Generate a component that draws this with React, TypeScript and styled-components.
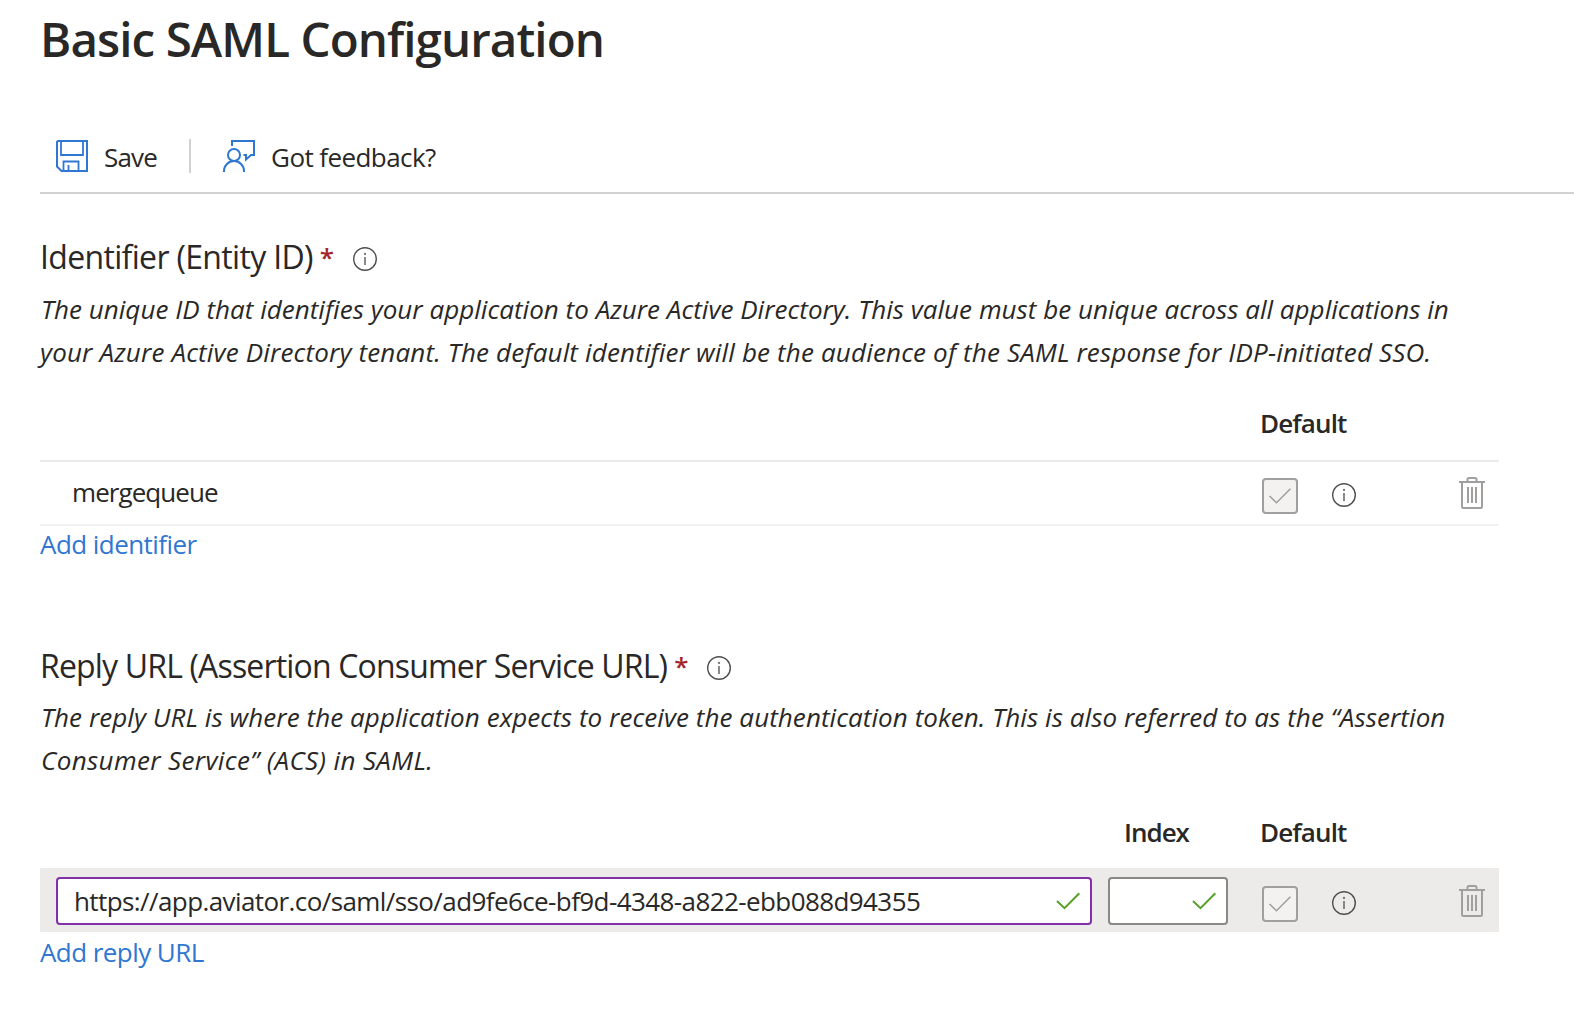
import React from 'react';
import styled, { createGlobalStyle } from 'styled-components';

const GlobalStyle = createGlobalStyle`
  * { box-sizing: border-box; }
  body {
    margin: 0;
    background: #ffffff;
    color: #292827;
    font-family: 'Segoe UI', 'Open Sans', 'Noto Sans', sans-serif;
    font-size: 26px;
    overflow: hidden;
  }
`;

const Page = styled.main`
  width: 1574px;
  height: 1032px;
  padding: 7px 0 0 40px;
  overflow: hidden;
`;

const Text = styled.span<{ $track?: number; $indent?: number }>`
  margin-left: ${(p) => p.$indent ?? 0}px;
  letter-spacing: ${(p) => p.$track ?? 0}px;
  white-space: pre;
`;

const Title = styled.h1`
  margin: 0;
  font-size: 47.5px;
  line-height: 64px;
  font-weight: 600;
`;

const Toolbar = styled.div`
  display: flex;
  align-items: center;
  height: 74px;
  margin-top: 49px;
  padding-left: 16px;
  border-bottom: 2px solid #d2d2d2;
`;

const ToolButton = styled.button`
  display: flex;
  align-items: center;
  gap: 16px;
  padding: 0;
  border: 0;
  background: none;
  color: inherit;
  font: inherit;
  line-height: 36px;
`;

const ToolLabel = styled(Text)`
  padding-top: 2px;
`;

const ToolDivider = styled.span`
  width: 2px;
  height: 34px;
  margin: 0 32px;
  background: #d0d0d0;
`;

const Section = styled.section<{ $top: number }>`
  width: 1459px;
  margin-top: ${(p) => p.$top}px;
`;

const LabelRow = styled.h2`
  display: flex;
  align-items: center;
  height: 44px;
  margin: 0;
  padding-top: 2px;
  font-size: 32px;
  font-weight: 400;
  line-height: 42px;
`;

const Required = styled.span`
  width: 14px;
  margin-left: 7px;
  color: #a4262c;
  font-size: 26px;
  font-weight: 600;
`;

const LabelInfo = styled.span`
  display: flex;
  margin: 4px 0 0 19px;
`;

const Description = styled.p<{ $top: number }>`
  height: 86px;
  margin: ${(p) => p.$top}px 0 0;
  font-style: italic;
  line-height: 43px;
`;

const Grid = styled.div`
  display: grid;
  grid-template-columns: 1068px 154px 64px 114px 59px;
  align-items: center;
`;

const HeaderRow = styled(Grid)<{ $top: number; $height: number }>`
  height: ${(p) => p.$height}px;
  margin-top: ${(p) => p.$top}px;
  font-weight: 600;
  line-height: 36px;
`;

const IndexHead = styled.span`
  padding-left: 16px;
`;

const ValueRow = styled(Grid)`
  height: 66px;
  border-top: 2px solid #eaeaea;
  border-bottom: 2px solid #f1f1f1;
`;

const EditRow = styled(Grid)`
  height: 64px;
  background: #edebe9;
`;

const Value = styled.span`
  padding: 0 0 2px 32px;
  line-height: 36px;
`;

const Field = styled.div<{ $active?: boolean }>`
  display: flex;
  align-items: center;
  justify-content: space-between;
  height: 48px;
  margin-top: 2px;
  padding: 0 10px 0 16px;
  border: 2px solid ${(p) => (p.$active ? '#8031a7' : '#8a8886')};
  border-radius: 4px;
  background: #ffffff;
  line-height: 36px;
`;

const UrlField = styled(Field)`
  margin-left: 16px;
  margin-right: 16px;
`;

const IndexField = styled(Field)`
  width: 120px;
  justify-content: flex-end;
`;

const CheckBox = styled.span<{ $push: number }>`
  display: flex;
  align-items: center;
  justify-content: center;
  width: 36px;
  height: 36px;
  margin-top: ${(p) => p.$push}px;
  border: 2px solid #a19f9d;
  border-radius: 4px;
  background: #f3f2f1;
`;

const IconCell = styled.span<{ $push?: number; $left?: number }>`
  display: flex;
  padding-top: ${(p) => p.$push ?? 0}px;
  padding-left: ${(p) => p.$left ?? 0}px;
`;

const AddLink = styled.a<{ $top?: number }>`
  display: block;
  height: 36px;
  margin-top: ${(p) => p.$top ?? 0}px;
  color: #3077d2;
  line-height: 36px;
`;

const SaveIcon = () => (
  <svg width="32" height="32" viewBox="0 0 32 32" fill="none" stroke="#3077d2" strokeWidth="2">
    <path d="M2 1H31V31H5.500L1 26.500V2Z" />
    <path d="M5 1V15H27V1" strokeWidth="1.800" />
    <path d="M7.500 31V21.500H22.500V31M12.500 25V30" strokeWidth="1.800" />
  </svg>
);

const FeedbackIcon = () => (
  <svg width="32" height="32" viewBox="0 0 32 32" fill="none" stroke="#3077d2" strokeWidth="2">
    <path d="M9 6V1H31V15H28L23 19.500V15H20.500" />
    <circle cx="11" cy="15" r="6" />
    <path d="M1 32V31A10 10 0 0 1 21 31V32" />
  </svg>
);

const InfoIcon = () => (
  <svg width="24" height="24" viewBox="0 0 24 24" fill="none">
    <circle cx="12" cy="12" r="11.300" stroke="#4f4e4d" strokeWidth="1.400" />
    <path d="M12 10V18" stroke="#767574" strokeWidth="1.700" />
    <circle cx="12" cy="7" r="1.150" fill="#767574" />
  </svg>
);

const TickIcon = ({ color }: { color: string }) => (
  <svg width="24" height="18" viewBox="0 0 24 18" fill="none" stroke={color} strokeWidth="2">
    <path d="M1 9L8.500 16.200L23.300 1.200" />
  </svg>
);

const BoxTickIcon = () => (
  <svg width="22" height="16" viewBox="0 0 22 16" fill="none" stroke="#a19f9d" strokeWidth="1.600">
    <path d="M.6 8L7.500 14.700L21.400 .8" />
  </svg>
);

const TrashIcon = () => (
  <svg width="26" height="32" viewBox="0 0 26 32" fill="none" stroke="#a19f9d" strokeWidth="2">
    <path d="M0 5H26M8.500 5V2.500Q8.500 1 10 1H16Q17.500 1 17.500 2.500V5" />
    <path d="M3 5V29.500Q3 31 4.500 31H21.500Q23 31 23 29.500V5" />
    <path d="M9 10V26M13 10V26M17 10V26" />
  </svg>
);

const RowActions = ({ shift = 0 }: { shift?: number }) => (
  <>
    <CheckBox $push={6 + shift}><BoxTickIcon /></CheckBox>
    <IconCell $push={4 + shift} $left={6}><InfoIcon /></IconCell>
    <IconCell $push={shift} $left={19}><TrashIcon /></IconCell>
  </>
);

export default function App() {
  return (
    <>
      <GlobalStyle />
      <Page>
        <Title><Text $track={-0.92}>Basic SAML Configuration</Text></Title>
        <Toolbar>
          <ToolButton><SaveIcon /><ToolLabel $track={-0.8}>Save</ToolLabel></ToolButton>
          <ToolDivider />
          <ToolButton><FeedbackIcon /><ToolLabel $track={-0.58}>Got feedback?</ToolLabel></ToolButton>
        </Toolbar>

        <Section $top={40}>
          <LabelRow>
            <Text $track={-0.67}>Identifier (Entity ID)</Text>
            <Required>*</Required>
            <LabelInfo><InfoIcon /></LabelInfo>
          </LabelRow>
          <Description $top={10}>
            <Text $track={0.027} $indent={1}>The unique ID that identifies your application to Azure Active Directory. This value must be unique across all applications in</Text>
            <br />
            <Text $track={0.16}>your Azure Active Directory tenant. The default identifier will be the audience of the SAML response for IDP-initiated SSO.</Text>
          </Description>
          <HeaderRow $top={12} $height={74}>
            <span />
            <span />
            <Text $track={-0.87} $indent={-2}>Default</Text>
          </HeaderRow>
          <ValueRow>
            <Value><Text $track={-0.93}>mergequeue</Text></Value>
            <span />
            <RowActions />
          </ValueRow>
          <AddLink><Text $track={-0.55}>Add identifier</Text></AddLink>
        </Section>

        <Section $top={81}>
          <LabelRow>
            <Text $track={-0.83}>Reply URL (Assertion Consumer Service URL)</Text>
            <Required>*</Required>
            <LabelInfo><InfoIcon /></LabelInfo>
          </LabelRow>
          <Description $top={9}>
            <Text $track={0.068} $indent={1}>The reply URL is where the application expects to receive the authentication token. This is also referred to as the “Assertion</Text>
            <br />
            <Text $track={0.37} $indent={1}>Consumer Service” (ACS) in SAML.</Text>
          </Description>
          <HeaderRow $top={13} $height={73}>
            <span />
            <IndexHead><Text $track={-1}>Index</Text></IndexHead>
            <Text $track={-0.87} $indent={-2}>Default</Text>
          </HeaderRow>
          <EditRow>
            <UrlField $active>
              <Text $track={-0.59}>https://app.aviator.co/saml/sso/ad9fe6ce-bf9d-4348-a822-ebb088d94355</Text>
              <TickIcon color="#57a028" />
            </UrlField>
            <IndexField><TickIcon color="#57a028" /></IndexField>
            <RowActions shift={2} />
          </EditRow>
          <AddLink $top={2}><Text $track={-0.57}>Add reply URL</Text></AddLink>
        </Section>
      </Page>
    </>
  );
}
